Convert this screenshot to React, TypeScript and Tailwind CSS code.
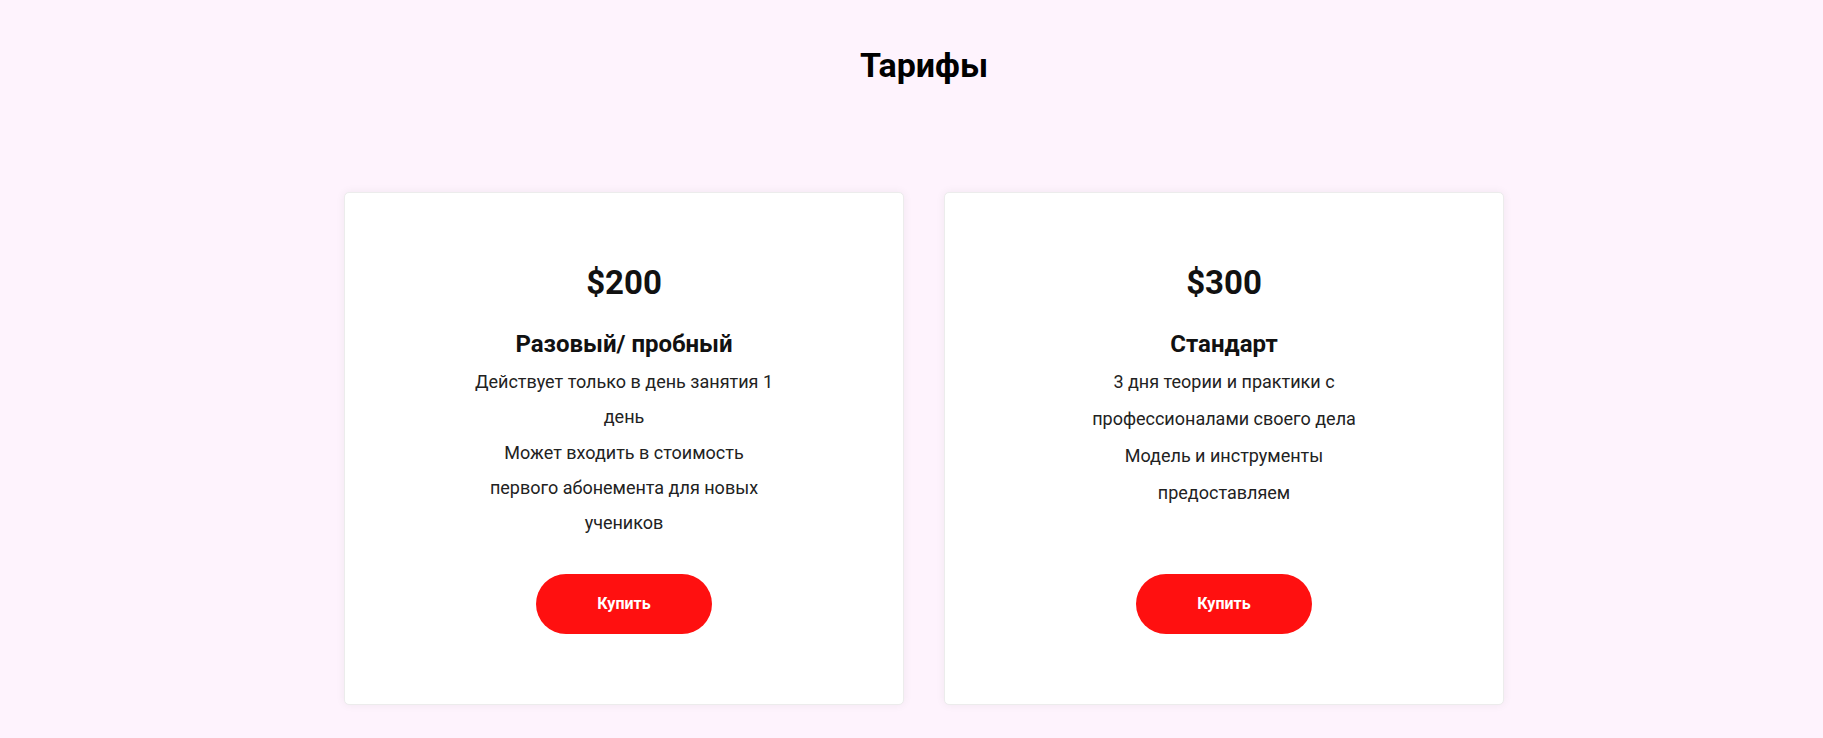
const plans = [
    {
        price: '$200',
        name: 'Разовый/ пробный',
        text: 'Действует только в день занятия 1 день',
        extra: 'Может входить в стоимость первого абонемента для новых учеников',
        leading: 'leading-[35.3px]',
    },
    {
        price: '$300',
        name: 'Стандарт',
        text: '3 дня теории и практики с профессионалами своего дела',
        extra: 'Модель и инструменты предоставляем',
        leading: 'leading-[36.9px]',
    },
];

const App = () => {
    return (
        <div className="min-h-[738px] bg-[#fef3fd] font-['Roboto',sans-serif] pl-[25px]">
            <h2 className="pt-[46px] text-center text-[34px] font-bold leading-[38px] text-black">
                Тарифы
            </h2>

            <div className="mt-[108px] flex justify-center gap-[40px]">
                {plans.map((plan) => (
                    <div
                        key={plan.price}
                        className="flex h-[513px] w-[560px] flex-col items-center rounded-[5px] border border-[#ececec] bg-white pt-[71px] pb-[70px] shadow-[0_0_10px_rgba(0,0,0,0.06)]"
                    >
                        <div className="text-[33px] font-bold leading-[38px] text-[#111]">
                            {plan.price}
                        </div>
                        <div className="mt-[29px] text-[24px] font-bold leading-[26px] text-[#111]">
                            {plan.name}
                        </div>
                        <div
                            className={`mt-[7px] w-[300px] text-center text-[18px] text-[#222] ${plan.leading}`}
                        >
                            <p>{plan.text}</p>
                            <p>{plan.extra}</p>
                        </div>
                        <button className="mt-auto h-[60px] w-[176px] rounded-full bg-[#ff1010] text-[16px] font-bold text-white">
                            Купить
                        </button>
                    </div>
                ))}
            </div>
        </div>
    );
};

export default App;
